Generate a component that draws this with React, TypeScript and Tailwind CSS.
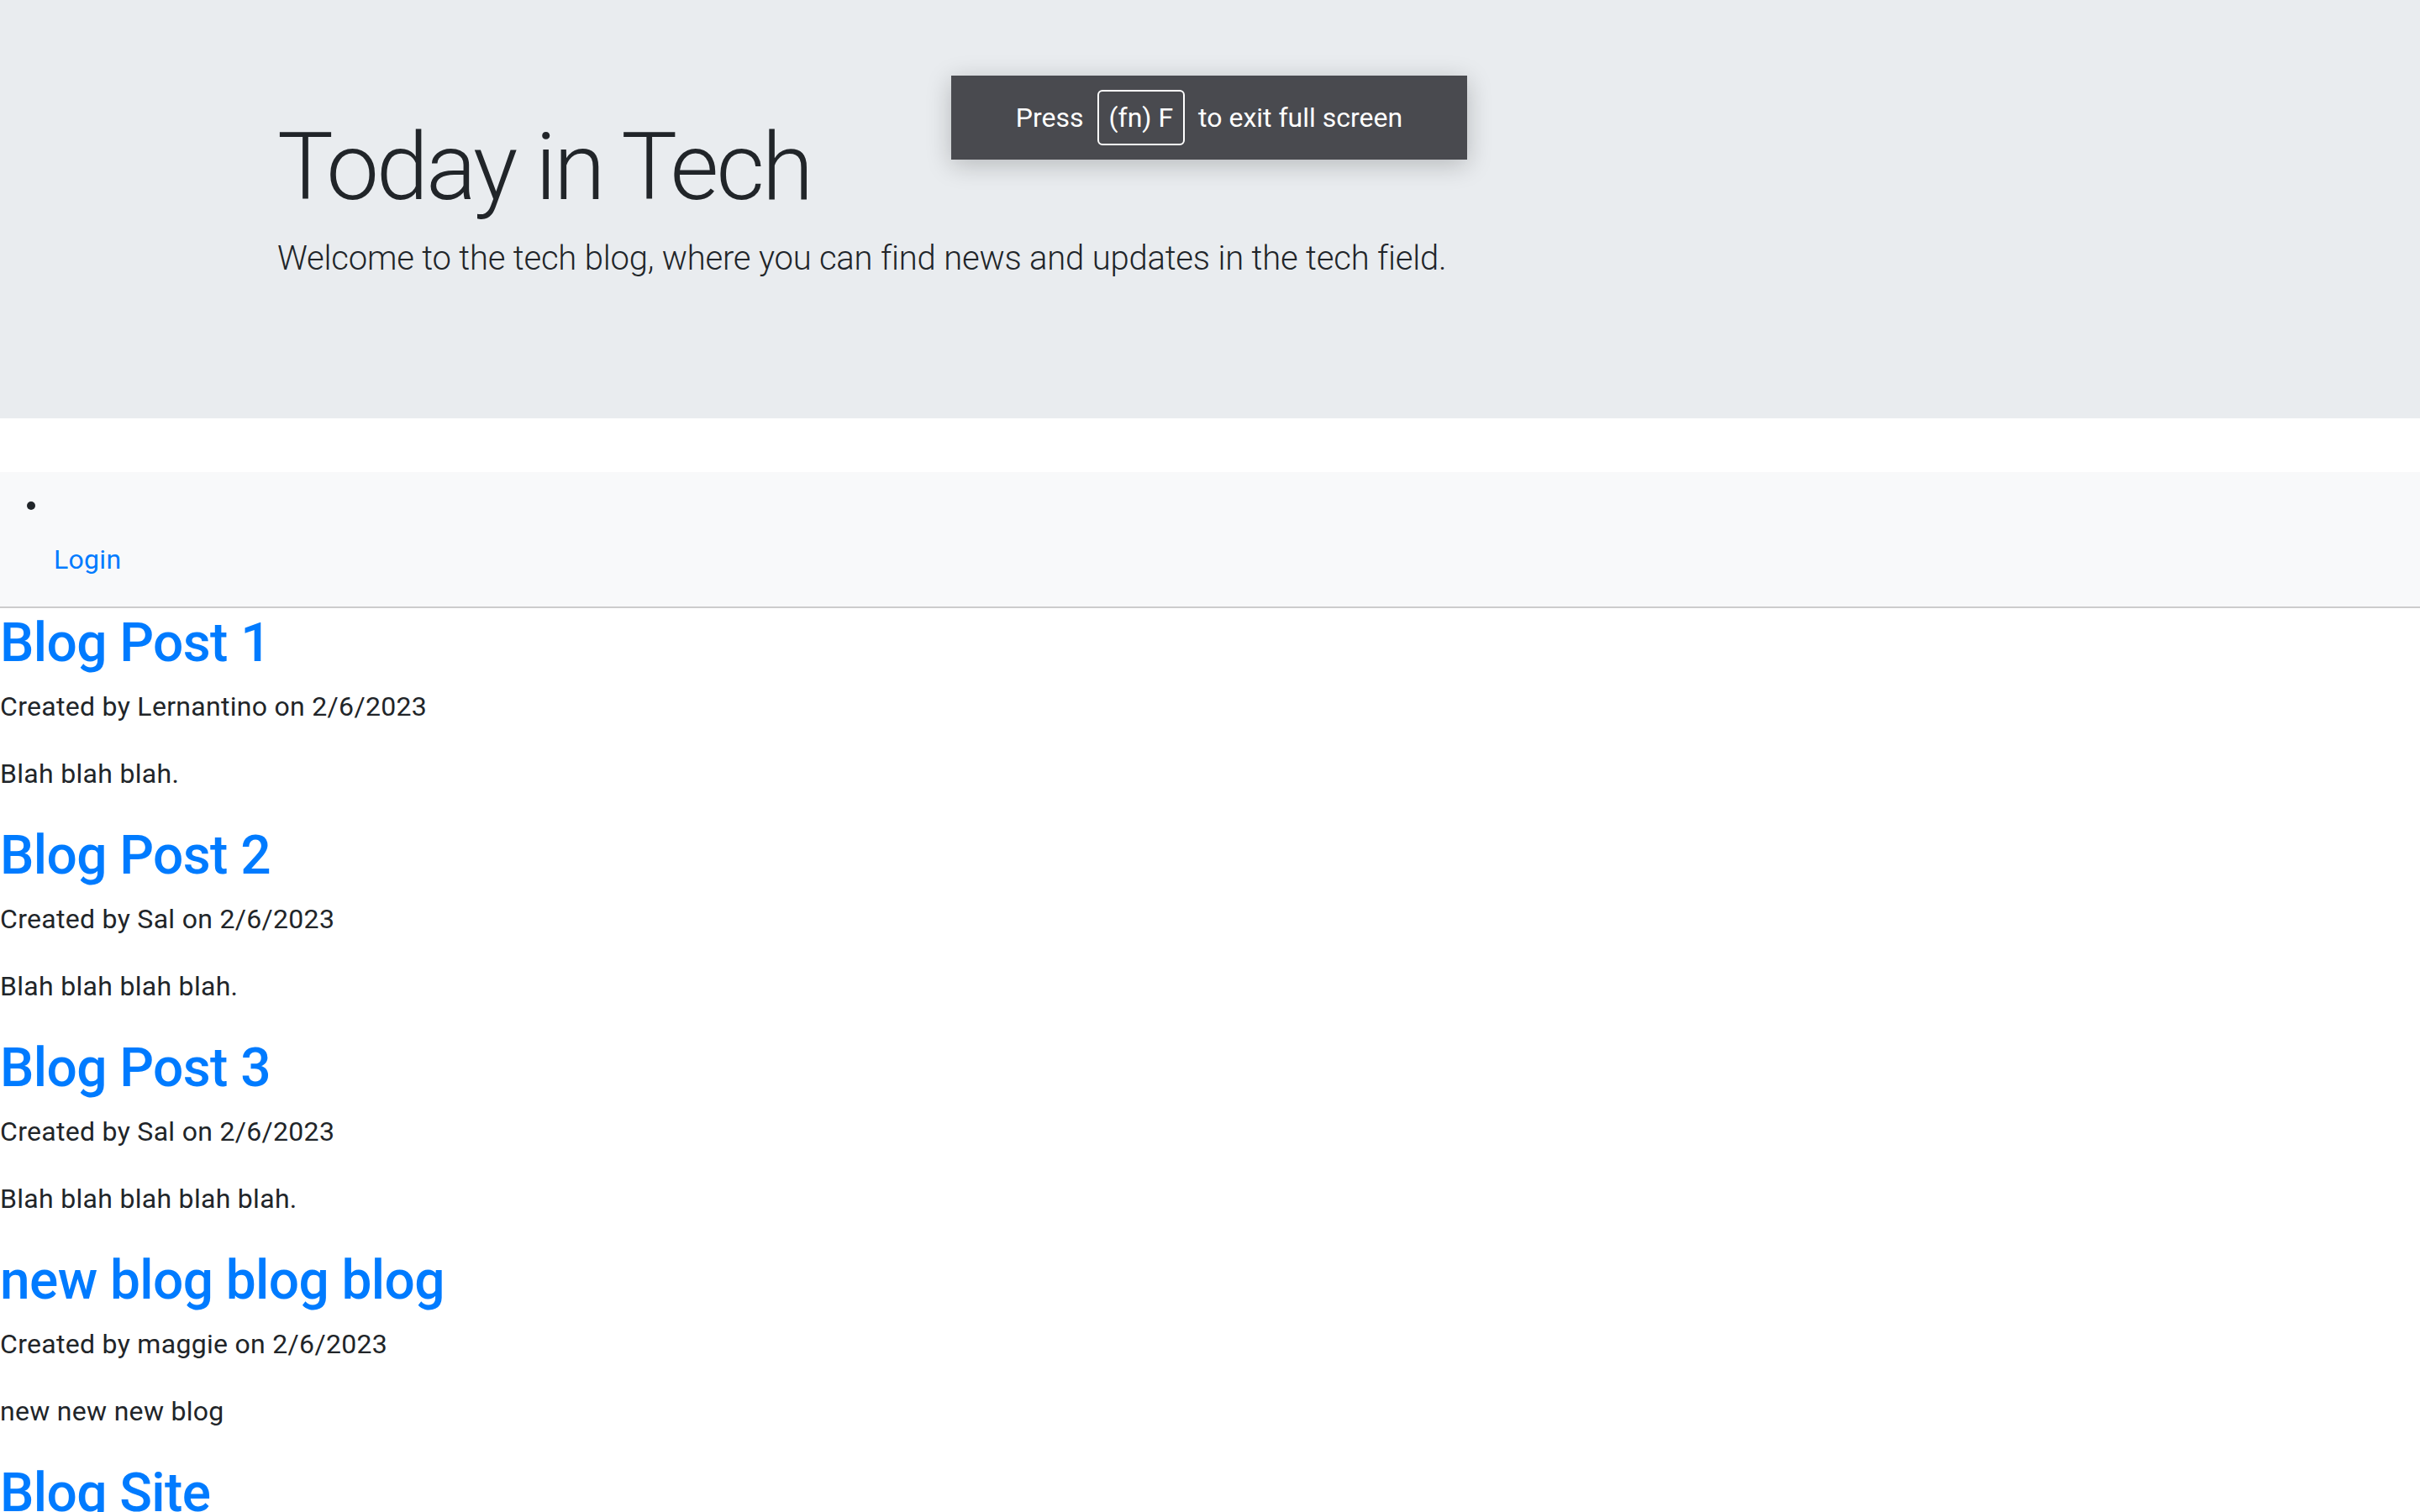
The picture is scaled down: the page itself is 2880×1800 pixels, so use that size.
const posts = [
  { title: "Blog Post 1", author: "Lernantino", date: "2/6/2023", body: "Blah blah blah." },
  { title: "Blog Post 2", author: "Sal", date: "2/6/2023", body: "Blah blah blah blah." },
  { title: "Blog Post 3", author: "Sal", date: "2/6/2023", body: "Blah blah blah blah blah." },
  { title: "new blog blog blog", author: "maggie", date: "2/6/2023", body: "new new new blog" },
];

const App = () => {
  return (
    <div className="relative min-h-screen bg-white text-[#212529] font-['Roboto','Liberation_Sans',sans-serif]">
      {/* jumbotron */}
      <div className="bg-[#e9ecef] pt-[128px] pb-[128px] mb-[64px]">
        <div className="pl-[330px]">
          <h1 className="text-[112px] leading-[1.2] font-light tracking-[-3.2px] pt-[4px] mb-[12px]">Today in Tech</h1>
          <p className="text-[40px] leading-[1.5] font-light tracking-[-0.2px] mb-[32px]">
            Welcome to the tech blog, where you can find news and updates in the tech field.
          </p>
        </div>
      </div>

      {/* navbar */}
      <nav className="bg-[#f8f9fa] px-[32px] py-[16px] border-b-[2px] border-[#cccccc]">
        <div className="h-[48px] flex items-center">
          <span className="w-[10px] h-[10px] rounded-full bg-[#212529]" />
        </div>
        <a href="#" className="block px-[32px] py-[16px] text-[32px] leading-[1.5] tracking-[0.3px] text-[#007bff]">
          Login
        </a>
      </nav>

      {/* posts */}
      <main>
        {posts.map((post) => (
          <div key={post.title}>
            <h2 className="text-[64px] leading-[1.2] font-medium tracking-[-0.6px] text-[#007bff] pt-[4px] mb-[12px]">
              {post.title}
            </h2>
            <p className="text-[32px] leading-[1.5] tracking-[0.3px] mb-[32px]">
              Created by {post.author} on {post.date}
            </p>
            <p className="text-[32px] leading-[1.5] tracking-[0.3px] mb-[32px]">{post.body}</p>
          </div>
        ))}
        <h2 className="text-[64px] leading-[1.2] font-medium tracking-[-0.6px] text-[#007bff] pt-[4px] mb-[12px]">
          Blog Site
        </h2>
      </main>

      {/* full screen notice */}
      <div className="absolute top-[90px] left-[1132px] w-[614px] h-[100px] bg-[#494a4f] shadow-[0_6px_28px_rgba(0,0,0,0.22)] flex items-center justify-center text-white text-[32px] font-normal">
        <span>Press</span>
        <span className="mx-[16px] h-[66px] px-[12px] border-2 border-white rounded-[6px] flex items-center">
          (fn) F
        </span>
        <span>to exit full screen</span>
      </div>
    </div>
  );
};

export default App;
